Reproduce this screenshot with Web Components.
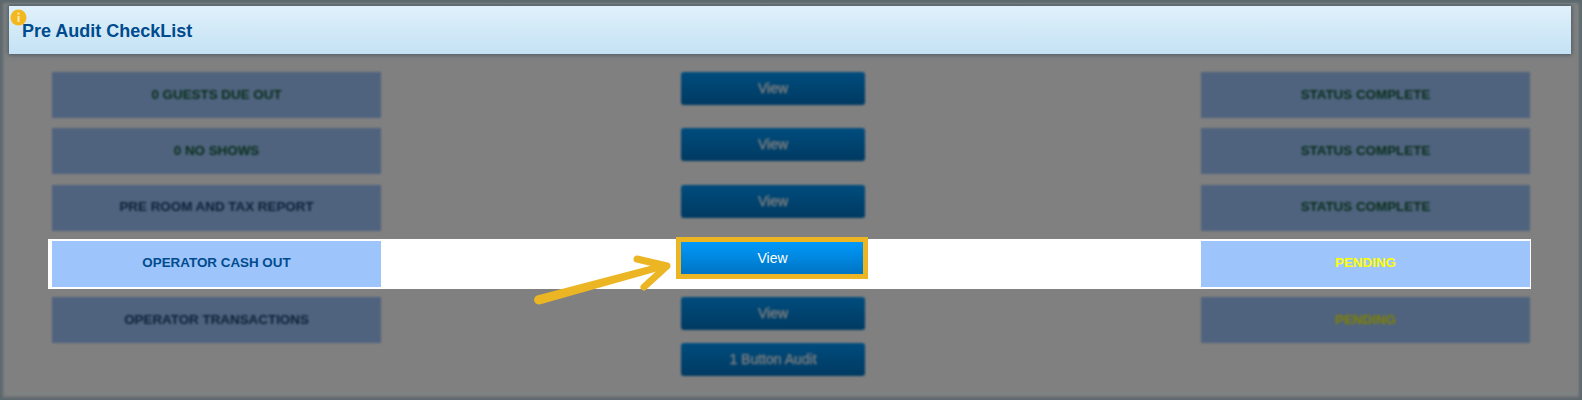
<!DOCTYPE html>
<html>
<head>
<meta charset="utf-8">
<title>Pre Audit CheckList</title>
<style>
    html, body { margin: 0; padding: 0; background: #808080; }
</style>
</head>
<body>

<audit-panel>
    <audit-title slot="title">Pre Audit CheckList</audit-title>

    <audit-row>
        <audit-cell tone="done">0 GUESTS DUE OUT</audit-cell>
        <audit-button>View</audit-button>
        <audit-cell tone="done">STATUS COMPLETE</audit-cell>
    </audit-row>
    <audit-row>
        <audit-cell tone="done">0 NO SHOWS</audit-cell>
        <audit-button>View</audit-button>
        <audit-cell tone="done">STATUS COMPLETE</audit-cell>
    </audit-row>
    <audit-row>
        <audit-cell>PRE ROOM AND TAX REPORT</audit-cell>
        <audit-button>View</audit-button>
        <audit-cell tone="done">STATUS COMPLETE</audit-cell>
    </audit-row>
    <audit-row active>
        <audit-cell>OPERATOR CASH OUT</audit-cell>
        <audit-button marked>View</audit-button>
        <audit-cell tone="pending">PENDING</audit-cell>
    </audit-row>
    <audit-row>
        <audit-cell>OPERATOR TRANSACTIONS</audit-cell>
        <audit-button>View</audit-button>
        <audit-cell tone="pending">PENDING</audit-cell>
    </audit-row>
    <audit-row compact>
        <span></span>
        <audit-button>1 Button Audit</audit-button>
    </audit-row>
</audit-panel>

<script>
class AuditPanel extends HTMLElement {
    constructor() {
        super();
        this.attachShadow({ mode: 'open' });
        this.shadowRoot.innerHTML = `
            <style>
                :host {
                    display: block;
                    position: relative;
                    height: 400px;
                    box-sizing: border-box;
                    overflow: hidden;
                    padding: 6px 11px 0 9px;
                    background: #808080;
                    box-shadow: inset 0 0 3px 3px #5c686d;
                    font-family: "Liberation Sans", Arial, sans-serif;
                }
                .edge {
                    position: absolute;
                    inset: 3px 4px 6px 6px;
                    border: 1px solid #788688;
                    border-radius: 4px;
                    pointer-events: none;
                }
                .rows {
                    display: flex;
                    flex-direction: column;
                    padding: 18px 0 0 43px;
                }
                .arrow {
                    position: absolute;
                    left: 530px;
                    top: 250px;
                }
            </style>
            <div class="edge"></div>
            <slot name="title"></slot>
            <div class="rows"><slot></slot></div>
            <svg class="arrow" width="150" height="60" viewBox="530 250 150 60">
                <path d="M537 295.5 L663 262.5 L665.5 269 L539.5 304.5 Q535 304.5 534 300 Q534 297 537 295.5 Z" fill="#ecb524"/>
                <path d="M637 259 L667 266 L644 287" fill="none" stroke="#ecb524" stroke-width="7" stroke-linecap="round" stroke-linejoin="round"/>
            </svg>
        `;
    }
}

class AuditTitle extends HTMLElement {
    constructor() {
        super();
        this.attachShadow({ mode: 'open' });
        this.shadowRoot.innerHTML = `
            <style>
                :host {
                    display: flex;
                    align-items: center;
                    position: relative;
                    height: 48px;
                    box-sizing: border-box;
                    padding: 2px 0 0 13px;
                    background: linear-gradient(#e0f1fb, #c4e2f4);
                    box-shadow: 0 0 4px 1px #4a5a62;
                    color: #004b8d;
                    font-size: 18px;
                    font-weight: bold;
                }
                svg {
                    position: absolute;
                    left: 1px;
                    top: 3px;
                }
            </style>
            <svg width="17" height="17" viewBox="0 0 17 17">
                <circle cx="8.5" cy="8.5" r="8" fill="#f3b81f"/>
                <rect x="7.5" y="3.6" width="2" height="2" fill="#fbe9b4"/>
                <rect x="7.5" y="7" width="2" height="6" fill="#fbe9b4"/>
            </svg>
            <slot></slot>
        `;
    }
}

class AuditRow extends HTMLElement {
    constructor() {
        super();
        this.attachShadow({ mode: 'open' });
        this.shadowRoot.innerHTML = `
            <style>
                :host {
                    --label: #1c3f6e;
                    --done: #0f5c36;
                    display: grid;
                    grid-template-columns: 329px 1fr 329px;
                    align-items: start;
                    width: 1478px;
                    height: 46px;
                    margin-bottom: 10.25px;
                    box-sizing: content-box;
                    filter: brightness(0.5) blur(1.1px);
                }
                :host([active]) {
                    --label: #004b8d;
                    margin: -2px -1px 8.25px -4px;
                    padding: 2px 1px 2px 4px;
                    background: #fff;
                    filter: none;
                }
                :host([compact]) {
                    height: 33px;
                    margin-top: -10px;
                    margin-bottom: 0;
                }
            </style>
            <slot></slot>
        `;
    }
}

class AuditCell extends HTMLElement {
    constructor() {
        super();
        this.attachShadow({ mode: 'open' });
        this.shadowRoot.innerHTML = `
            <style>
                :host {
                    display: flex;
                    align-items: center;
                    justify-content: center;
                    height: 46px;
                    padding-bottom: 2px;
                    box-sizing: border-box;
                    background: #9ec5fb;
                    color: var(--label);
                    font-size: 13.4px;
                    font-weight: bold;
                }
                :host([tone="done"]) { color: var(--done); }
                :host([tone="pending"]) { color: #ffff00; }
            </style>
            <slot></slot>
        `;
    }
}

class AuditButton extends HTMLElement {
    constructor() {
        super();
        this.attachShadow({ mode: 'open' });
        this.shadowRoot.innerHTML = `
            <style>
                :host {
                    display: flex;
                    align-items: center;
                    justify-content: center;
                    position: relative;
                    width: 184px;
                    height: 33px;
                    margin-left: 300px;
                    padding-bottom: 1px;
                    box-sizing: border-box;
                    border-radius: 3px;
                    background: linear-gradient(#0099fb, #0073c2);
                    color: #fff;
                    font-size: 14px;
                    -webkit-text-stroke: 0.25px #fff;
                }
                :host([marked]) {
                    width: 183px;
                    margin-top: 1px;
                    border-radius: 0;
                    -webkit-text-stroke: 0;
                }
                :host([marked])::after {
                    content: "";
                    position: absolute;
                    inset: -5px -4px -4px -5px;
                    border: 5px solid #ecb524;
                }
            </style>
            <slot></slot>
        `;
    }
}

customElements.define('audit-panel', AuditPanel);
customElements.define('audit-title', AuditTitle);
customElements.define('audit-row', AuditRow);
customElements.define('audit-cell', AuditCell);
customElements.define('audit-button', AuditButton);
</script>
</body>
</html>
